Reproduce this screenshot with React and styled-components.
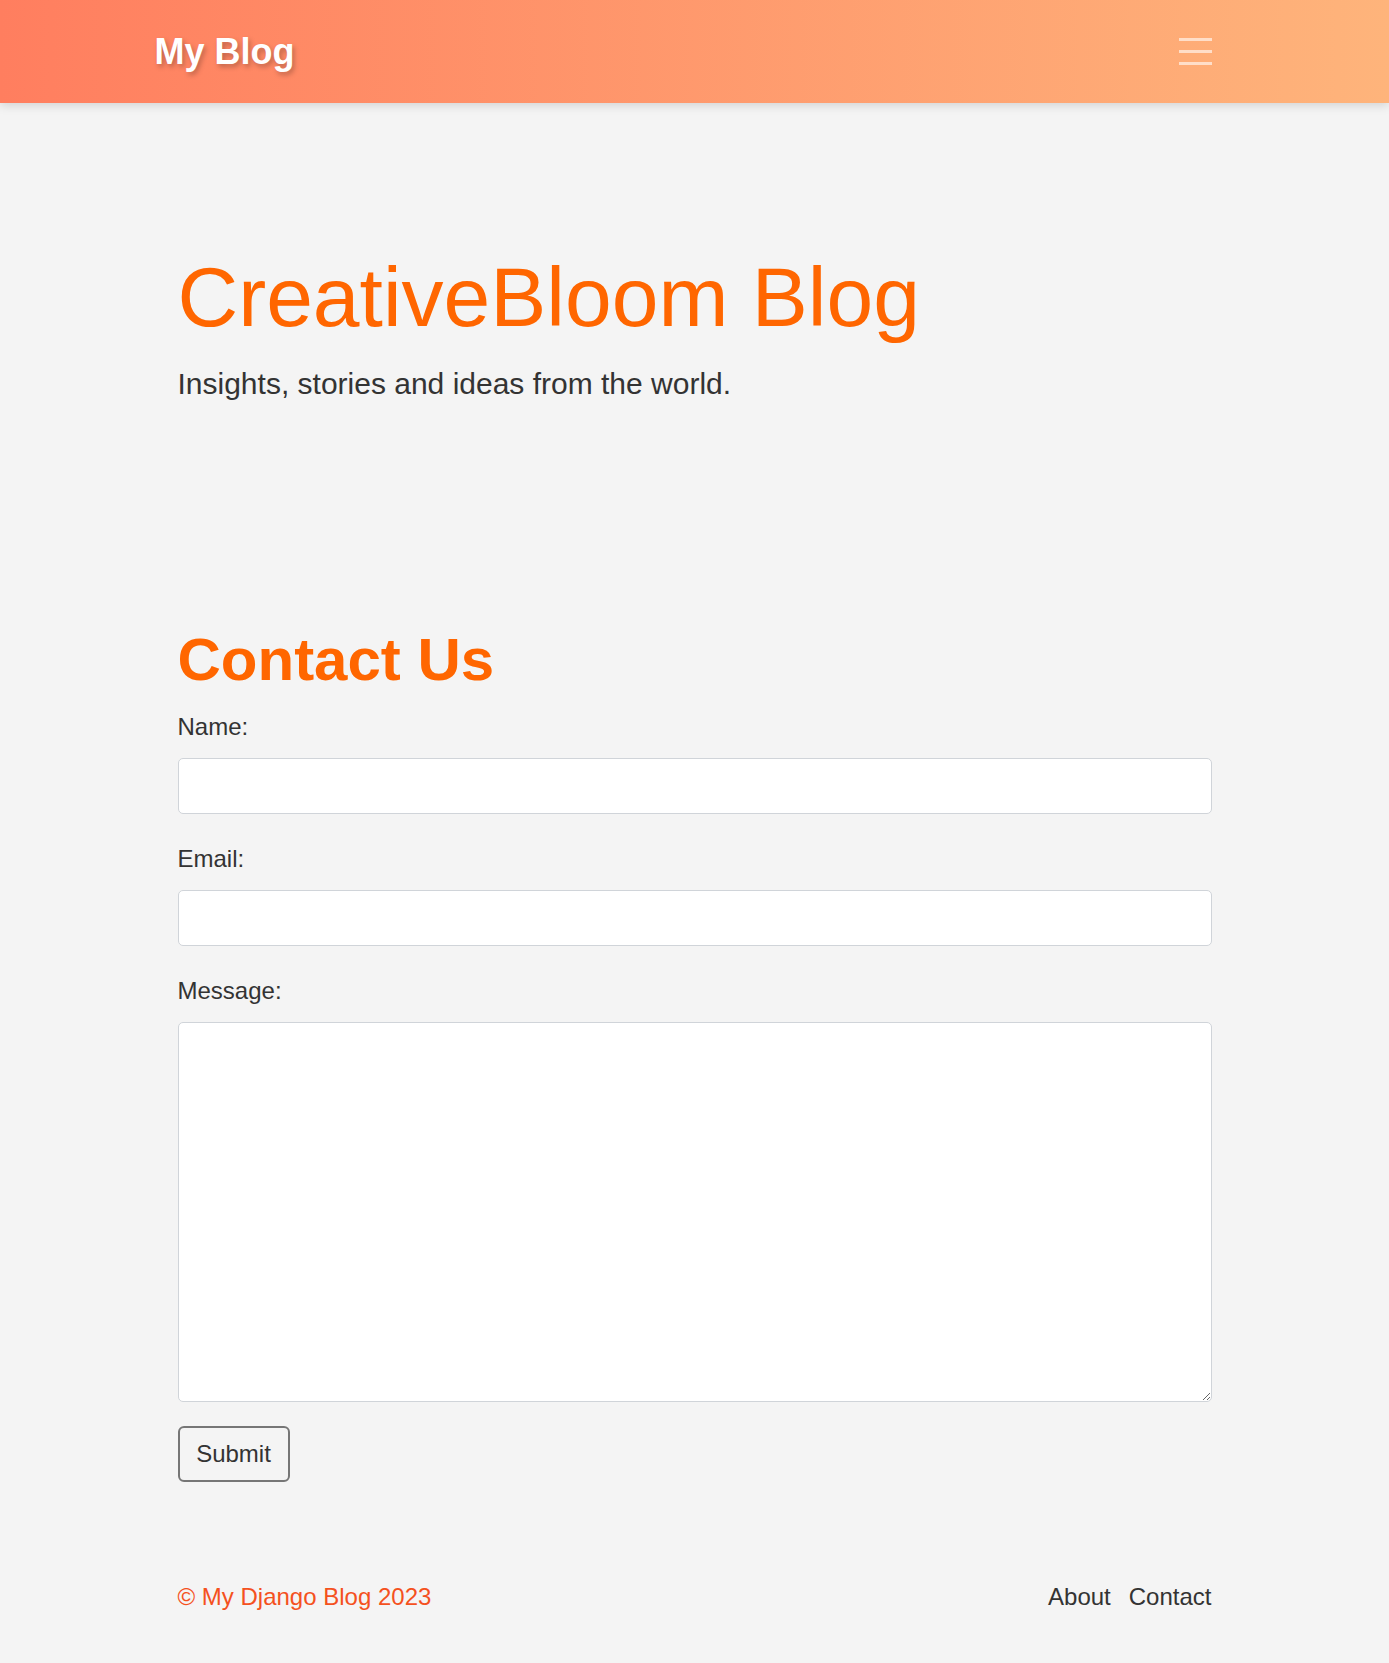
import React from 'react';
import styled, { createGlobalStyle } from 'styled-components';

const GlobalStyle = createGlobalStyle`
    * {
        box-sizing: border-box;
    }

    body {
        margin: 0;
        background-color: #f4f4f4;
        font-family: "Liberation Sans", Arial, sans-serif;
        color: #333;
    }
`;

const Header = styled.header`
    height: 103px;
    background: linear-gradient(to right, #ff7e5f, #feb47b);
    box-shadow: 0 2px 10px rgba(0, 0, 0, 0.15);
    display: flex;
    align-items: center;
`;

const HeaderInner = styled.div`
    width: 1034px;
    margin: 0 auto;
    display: flex;
    justify-content: space-between;
    align-items: center;
`;

const Logo = styled.a`
    margin-left: -23px;
    font-size: 36px;
    line-height: 36px;
    font-weight: 700;
    color: #fff;
    text-decoration: none;
    text-shadow: 2px 3px 5px rgba(0, 0, 0, 0.25);
`;

const Burger = styled.button`
    width: 33px;
    padding: 0;
    border: none;
    background: none;
    display: flex;
    flex-direction: column;
    gap: 9px;
    cursor: pointer;

    & span {
        display: block;
        height: 3px;
        background-color: rgba(255, 255, 255, 0.6);
    }
`;

const Main = styled.main`
    width: 1034px;
    margin: 0 auto;
`;

const Hero = styled.section`
    padding-top: 153px;
`;

const Title = styled.h1`
    margin: 0;
    font-size: 84px;
    line-height: 83px;
    font-weight: 400;
    color: #ff6600;
`;

const Subtitle = styled.p`
    margin: 30px 0 0;
    font-size: 30px;
    line-height: 30px;
    color: #333;
`;

const Contact = styled.section`
    margin-top: 231px;
`;

const ContactTitle = styled.h2`
    margin: 0 0 25px;
    font-size: 60px;
    line-height: 60px;
    font-weight: 700;
    color: #ff6600;
`;

const Form = styled.form`
    display: flex;
    flex-direction: column;
    align-items: flex-start;
`;

const Label = styled.label`
    display: block;
    font-size: 24px;
    line-height: 24px;
    color: #333;
    margin-top: ${props => (props.first ? '0' : '33px')};
    margin-bottom: 19px;
`;

const Input = styled.input`
    width: 100%;
    height: 56px;
    padding: 0 14px;
    font-size: 22px;
    font-family: inherit;
    background-color: #fff;
    border: 1px solid #d0d4d9;
    border-radius: 5px;
`;

const TextArea = styled.textarea`
    width: 100%;
    height: 380px;
    padding: 12px 14px;
    font-size: 22px;
    font-family: inherit;
    background-color: #fff;
    border: 1px solid #d0d4d9;
    border-radius: 5px;
    display: block;
`;

const SubmitButton = styled.button`
    margin-top: 24px;
    height: 56px;
    width: 112px;
    font-size: 24px;
    font-family: inherit;
    color: #333;
    background-color: #f4f4f4;
    border: 2px solid #767676;
    border-radius: 6px;
    cursor: pointer;
`;

const Footer = styled.footer`
    width: 1034px;
    margin: 0 auto;
    padding: 103px 0 54px;
    display: flex;
    justify-content: space-between;
    font-size: 24px;
    line-height: 24px;
`;

const Copyright = styled.span`
    color: #f4511e;
`;

const FooterLinks = styled.nav`
    display: flex;
    gap: 18px;

    & a {
        color: #333;
        text-decoration: none;
    }
`;

const App = () => (
    <>
        <GlobalStyle />
        <Header>
            <HeaderInner>
                <Logo href="#">My Blog</Logo>
                <Burger aria-label="Menu">
                    <span />
                    <span />
                    <span />
                </Burger>
            </HeaderInner>
        </Header>
        <Main>
            <Hero>
                <Title>CreativeBloom Blog</Title>
                <Subtitle>Insights, stories and ideas from the world.</Subtitle>
            </Hero>
            <Contact>
                <ContactTitle>Contact Us</ContactTitle>
                <Form onSubmit={e => e.preventDefault()}>
                    <Label htmlFor="name" first>Name:</Label>
                    <Input id="name" type="text" name="name" />
                    <Label htmlFor="email">Email:</Label>
                    <Input id="email" type="email" name="email" />
                    <Label htmlFor="message">Message:</Label>
                    <TextArea id="message" name="message" />
                    <SubmitButton type="submit">Submit</SubmitButton>
                </Form>
            </Contact>
        </Main>
        <Footer>
            <Copyright>© My Django Blog 2023</Copyright>
            <FooterLinks>
                <a href="#">About</a>
                <a href="#">Contact</a>
            </FooterLinks>
        </Footer>
    </>
);

export default App;
